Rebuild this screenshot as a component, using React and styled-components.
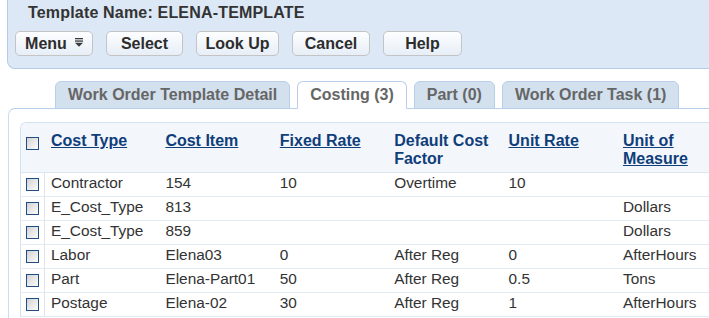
import React from "react";
import styled, { createGlobalStyle } from "styled-components";

const GlobalStyle = createGlobalStyle`
  html, body {
    margin: 0;
    padding: 0;
    background: #ffffff;
    overflow: hidden;
  }
  body {
    font-family: "Liberation Sans", Arial, sans-serif;
    color: #333333;
  }
`;

const Page = styled.div`
  width: 709px;
  height: 318px;
  overflow: hidden;
`;

const Header = styled.div`
  margin-left: 7px;
  padding: 3px 0 12px 7px;
  background: #dce8f5;
  border-left: 1px solid #b4cce7;
  border-bottom: 1px solid #b4cce7;
  border-bottom-left-radius: 8px;
`;

const Title = styled.div`
  padding-left: 13px;
  font-size: 16px;
  font-weight: bold;
  line-height: 20px;
  letter-spacing: 0.18px;
  color: #333333;
`;

const Toolbar = styled.div`
  display: flex;
  gap: 13px;
  margin-top: 8px;
`;

const Button = styled.button`
  box-sizing: border-box;
  display: flex;
  align-items: center;
  justify-content: center;
  gap: 8px;
  width: ${(p) => p.$w}px;
  height: 25px;
  padding: 0;
  border: 1px solid #c4c4c4;
  border-radius: 5px;
  background: linear-gradient(#fdfeff, #e7eef7);
  font-family: inherit;
  font-size: 16px;
  font-weight: bold;
  color: #2d2d2d;
`;

const MenuIcon = () => (
  <svg width="8" height="9" viewBox="0 0 8 9" style={{ marginTop: -3 }}>
    <rect x="0" y="0" width="8" height="1.3" fill="#3a3a3a" />
    <rect x="0" y="2.4" width="8" height="1.3" fill="#3a3a3a" />
    <polygon points="0,4.8 8,4.8 4,8.8" fill="#3a3a3a" />
  </svg>
);

const TabBar = styled.div`
  display: flex;
  align-items: flex-end;
  gap: 7px;
  margin: 12px 0 0 8px;
  padding-left: 47px;
`;

const Tab = styled.div`
  position: relative;
  z-index: 1;
  box-sizing: border-box;
  height: 28px;
  margin-bottom: -1px;
  padding: 0 12px;
  border: 1px solid #b7cfea;
  border-bottom-color: ${(p) => (p.$active ? "#ffffff" : "#b7cfea")};
  border-radius: 6px 6px 0 0;
  background: ${(p) => (p.$active ? "#ffffff" : "#d3e0ee")};
  font-size: 16px;
  font-weight: bold;
  line-height: 26px;
  color: #666666;
  white-space: nowrap;
`;

const Panel = styled.div`
  margin-left: 8px;
  padding: 13px 0 0 11px;
  border-top: 1px solid #b7cfea;
  border-left: 1px solid #c9dcf0;
  border-top-left-radius: 7px;
  height: 200px;
`;

const Grid = styled.div`
  border-top: 1px solid #d3e2f3;
  border-left: 1px solid #d3e2f3;
  border-top-left-radius: 6px;
  overflow: hidden;
  background: #ffffff;
`;

const HeadRow = styled.div`
  display: grid;
  grid-template-columns: 24px repeat(5, 114.4px) 1fr;
  height: 49px;
  background: #f3f7fc;
  border-bottom: 1px solid #dbe6f2;
`;

const Row = styled.div`
  display: grid;
  grid-template-columns: 24px repeat(5, 114.4px) 1fr;
  height: 23px;
  border-bottom: 1px solid #e3eaf3;
`;

const CheckCell = styled.div`
  box-sizing: border-box;
  padding: ${(p) => (p.$head ? "14px" : "5px")} 0 0 5px;
  border-right: ${(p) => (p.$head ? "none" : "1px solid #dde6f0")};
`;

const Check = styled.div`
  box-sizing: border-box;
  width: 13px;
  height: 13px;
  border: 1px solid #1e4c84;
  background: linear-gradient(135deg, #d2d2d2, #fdfdfd);
`;

const HeadCell = styled.div`
  padding: 9px 4px 0 6px;
  font-size: 16px;
  font-weight: bold;
  line-height: 18px;
  color: #0f3e7a;
  text-decoration: ${(p) => (p.$plain ? "none" : "underline")};
`;

const Cell = styled.div`
  padding-left: 6px;
  font-size: 15.4px;
  line-height: 20px;
  color: #333333;
  white-space: nowrap;
`;

const columns = [
  { label: "Cost Type" },
  { label: "Cost Item" },
  { label: "Fixed Rate" },
  { label: "Default Cost Factor", plain: true },
  { label: "Unit Rate" },
  { label: "Unit of Measure" },
];

const rows = [
  ["Contractor", "154", "10", "Overtime", "10", ""],
  ["E_Cost_Type", "813", "", "", "", "Dollars"],
  ["E_Cost_Type", "859", "", "", "", "Dollars"],
  ["Labor", "Elena03", "0", "After Reg", "0", "AfterHours"],
  ["Part", "Elena-Part01", "50", "After Reg", "0.5", "Tons"],
  ["Postage", "Elena-02", "30", "After Reg", "1", "AfterHours"],
];

const buttons = [
  { label: "Menu", w: 78, icon: true },
  { label: "Select", w: 77 },
  { label: "Look Up", w: 83 },
  { label: "Cancel", w: 78 },
  { label: "Help", w: 79 },
];

const tabs = [
  { label: "Work Order Template Detail" },
  { label: "Costing (3)", active: true },
  { label: "Part (0)" },
  { label: "Work Order Task (1)" },
];

export default function App() {
  return (
    <Page>
      <GlobalStyle />
      <Header>
        <Title>Template Name: ELENA-TEMPLATE</Title>
        <Toolbar>
          {buttons.map((b) => (
            <Button key={b.label} $w={b.w}>
              {b.label}
              {b.icon && <MenuIcon />}
            </Button>
          ))}
        </Toolbar>
      </Header>
      <TabBar>
        {tabs.map((t) => (
          <Tab key={t.label} $active={t.active}>
            {t.label}
          </Tab>
        ))}
      </TabBar>
      <Panel>
        <Grid>
          <HeadRow>
            <CheckCell $head>
              <Check />
            </CheckCell>
            {columns.map((c) => (
              <HeadCell key={c.label} $plain={c.plain}>
                {c.label}
              </HeadCell>
            ))}
          </HeadRow>
          {rows.map((r, i) => (
            <Row key={i}>
              <CheckCell>
                <Check />
              </CheckCell>
              {r.map((v, j) => (
                <Cell key={j}>{v}</Cell>
              ))}
            </Row>
          ))}
        </Grid>
      </Panel>
    </Page>
  );
}
